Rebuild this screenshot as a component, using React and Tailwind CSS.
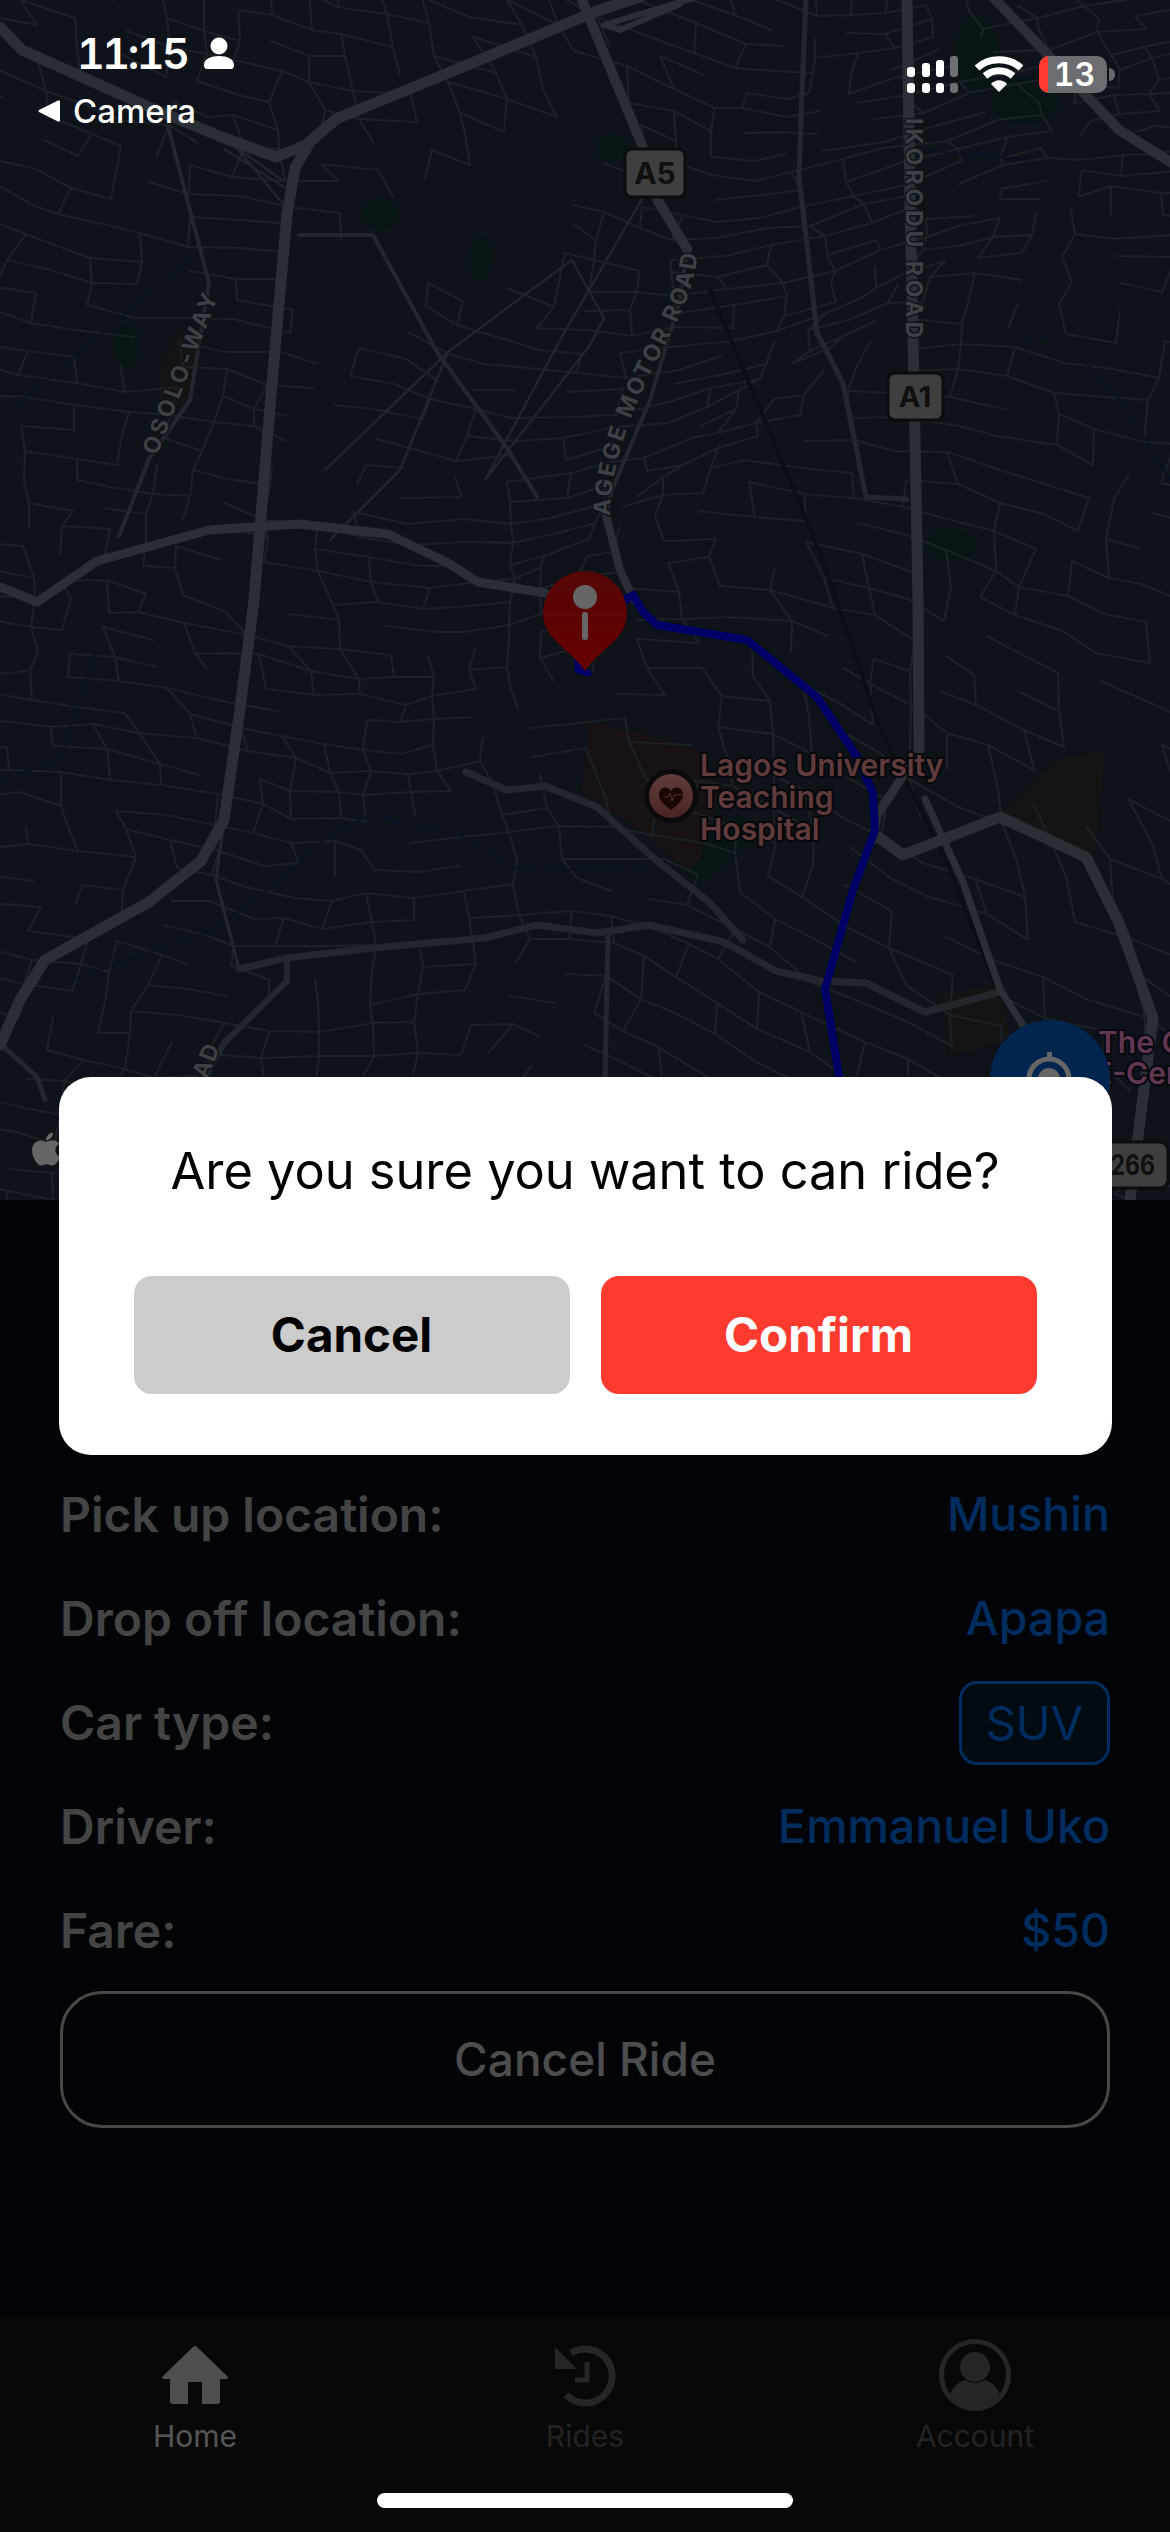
import React from "react";
import { FaApple } from "react-icons/fa";

function rng(seed) {
  let a = seed;
  return () => {
    a |= 0; a = (a + 0x6d2b79f5) | 0;
    let t = Math.imul(a ^ (a >>> 15), 1 | a);
    t = (t + Math.imul(t ^ (t >>> 7), 61 | t)) ^ t;
    return ((t ^ (t >>> 14)) >>> 0) / 4294967296;
  };
}

function buildStreets() {
  const r = rng(77);
  const SX = 44, SY = 27, W = 36, H = 66;
  const nodes = [];
  for (let i = 0; i < W; i++) {
    nodes[i] = [];
    for (let j = 0; j < H; j++) {
      const bx = (i - 4) * SX;
      const by = (j - 14) * SY;
      const x = bx + 30 * Math.sin(by / 120 + 0.7) + 14 * Math.sin((bx + by) / 70) + (r() - 0.5) * 15;
      const y = by + bx * (0.17 + 0.12 * Math.sin(bx / 300 + by / 260)) + 16 * Math.sin(bx / 90 + by / 200) + (r() - 0.5) * 11;
      nodes[i][j] = [Math.round(x), Math.round(y)];
    }
  }
  const isEmpty = (x, y) =>
    (y > 85 && y < 345 && x > 300 && x < 620 && y > 250 - (x - 300) * 0.55 && x < 640 - (y - 85) * 0.45 && !(x > 420 && y > 290)) ||
    (x > 300 && x < 350 && y > 230 && y < 500);
  const out = [];
  const edge = (a, b) => {
    const mx = (a[0] + b[0]) / 2, my = (a[1] + b[1]) / 2;
    if (isEmpty(mx, my)) return;
    out.push(`M${a[0]} ${a[1]}L${b[0]} ${b[1]}`);
  };
  for (let i = 0; i < W; i++) {
    for (let j = 0; j < H; j++) {
      const n = nodes[i][j];
      const zone = Math.sin(i * 0.55 + j * 0.2) + Math.cos(j * 0.33 - i * 0.15);
      if (i + 1 < W && r() < (zone > 0 ? 0.82 : 0.55)) edge(n, nodes[i + 1][j]);
      if (j + 1 < H && r() < (zone > 0 ? 0.38 : 0.62)) edge(n, nodes[i][j + 1]);
    }
  }
  return out.join("");
}

const STREETS = buildStreets();

const MAJOR = [
  ["M0 27L22 50L149 107L224 138L276 157L306 145L336 119L448 73L597 11L642 -4", 11],
  ["M336 119L310 142L295 168L287 214L272 383L254 600L239 716L224 820L201 861L149 902L45 960L20 1000L0 1045", 11],
  ["M582 0L642 145L657 199L687 249", 10],
  ["M634 600L620 570L606 515", 8],
  ["M907 0L910 200L914 383L918 600L919 749", 11],
  ["M992 -4L1119 130L1172 163", 10],
  ["M919 752L877 815L873 840", 9],
  ["M877 836L903 855L1000 817L1086 857L1119 923L1153 1018L1130 1200", 11],
  ["M0 587L37 602L97 561L209 530L299 524L388 534L448 563L478 582L545 593", 9],
  ["M925 799L963 882L1000 989L1026 1030", 7],
  ["M700 -4L604 25L620 30L680 4", 6],
];
const MEDIUM = [
  ["M687 249L680 300L650 400L612 490L606 515", 4],
  ["M466 772L507 790L545 786L597 807L657 861L709 902L743 940", 7],
  ["M239 969L287 958L373 948L485 938L537 925L597 933L649 925L724 942L776 971L821 981L866 983L925 1012L1000 992", 7],
  ["M287 960L287 981L224 1043L201 1085", 6],
  ["M0 1043L37 1077L45 1100", 5],
  ["M806 0L802 92L799 176L817 333L843 383L866 497L907 499", 5],
  ["M168 126L209 283L190 400L149 459L119 536", 4],
  ["M299 235L373 235L437 352L507 448L537 497", 4],
  ["M608 933L605 1080", 5],
  ["M239 969L216 880L224 820", 3],
];
const MINOR_HAND = "M572 260L515 302L448 352L325 470M572 260L604 318L590 345L485 480M448 352L400 470L330 540M224 149L284 187M230 140L284 205M240 150L282 180M642 199L560 340L485 480";

export default function App() {
  return (
    <div className="relative w-[1170px] h-[2532px] overflow-hidden flex flex-col bg-[#050a16] [font-family:Inter,sans-serif]">
      <div className="h-[1200px] shrink-0 bg-[#233041] overflow-hidden">
        <svg width="1170" height="1200" viewBox="0 0 1170 1200">
          <defs>
            <linearGradient id="pinFill" x1="0" y1="0" x2="0" y2="1">
              <stop offset="0" stopColor="#d81212" />
              <stop offset="1" stopColor="#ff0000" />
            </linearGradient>
            <linearGradient id="hospFill" x1="0" y1="0" x2="0" y2="1">
              <stop offset="0" stopColor="#f09a98" />
              <stop offset="1" stopColor="#b85a58" />
            </linearGradient>
          </defs>
          <g fill="#143537">
            <ellipse cx="977" cy="55" rx="22" ry="40" />
            <ellipse cx="1025" cy="100" rx="34" ry="24" />
            <ellipse cx="612" cy="148" rx="16" ry="14" />
            <ellipse cx="380" cy="214" rx="18" ry="16" />
            <ellipse cx="481" cy="258" rx="12" ry="22" />
            <ellipse cx="127" cy="345" rx="13" ry="22" />
            <ellipse cx="951" cy="545" rx="26" ry="16" />
            <path d="M672 862L735 815L770 826L700 885Z" />
          </g>
          <path d="M590 722L653 737L697 750L720 790L700 860L687 870L640 830L582 790Z" fill="#3f2e36" />
          <path d="M1000 815L1060 760L1105 750L1095 850L1086 857Z" fill="#363232" />
          <path d="M940 995L1000 985L1010 1040L950 1055Z" fill="#363232" />
          <path d="M160 370L180 330L200 345L190 400L160 410Z" fill="#363232" />
          <path d={STREETS} fill="none" stroke="#465062" strokeWidth="2.2" strokeLinecap="round" strokeLinejoin="round" />
          <path d={MINOR_HAND} fill="none" stroke="#505b6e" strokeWidth="2.5" strokeLinecap="round" strokeLinejoin="round" />
          <path d="M709 287L821 555L880 728L948 865L1000 998" fill="none" stroke="#1b2330" strokeWidth="4" />
          <g fill="none" stroke="#1b2c55" strokeWidth="2">
            <path d="M328 836L370 815L460 835L520 870L649 869" />
            <path d="M0 780L60 760L100 640" />
            <path d="M70 980L215 930L280 880L328 836" />
            <path d="M925 150L1030 160M1015 345L1060 335L1120 400L1170 480" />
            <path d="M0 420L200 250" />
            <path d="M770 1080L810 1095L840 1075" />
          </g>
          {MEDIUM.map(([d, w], i) => (
            <path key={i} d={d} fill="none" stroke="#586270" strokeWidth={w} strokeLinecap="round" strokeLinejoin="round" />
          ))}
          {MAJOR.map(([d, w], i) => (
            <path key={i} d={d} fill="none" stroke="#697586" strokeWidth={w} strokeLinecap="round" strokeLinejoin="round" />
          ))}
          <path d="M625 600L633 595L643 612L657 625L747 640L817 697L857 757L873 793L875 830L853 890L825 989L843 1100" fill="none" stroke="#0000ff" strokeWidth="8" strokeLinejoin="round" strokeLinecap="round" />
          <path d="M578 660L578 670L588 673" fill="none" stroke="#0000ff" strokeWidth="7" strokeLinejoin="round" strokeLinecap="round" />

          <g fontWeight="700" fontSize="23" fill="#9aa0aa" stroke="#233041" strokeWidth="3" style={{ paintOrder: "stroke" }}>
            <text transform="translate(157,456) rotate(-69)" letterSpacing="1.5" textLength="172">OSOLO-WAY</text>
            <text transform="translate(906,118) rotate(90)" letterSpacing="2" textLength="222">IKORODU ROAD</text>
            <path id="agege" d="M610 516C612 440 650 375 668 340C685 305 695 285 698 248" fill="none" stroke="none" />
            <text letterSpacing="1.5"><textPath href="#agege" textLength="280">AGEGE MOTOR ROAD</textPath></text>
            <text transform="translate(207,1080) rotate(-68)" letterSpacing="1">AD</text>
          </g>

          <g>
            <rect x="625" y="149" width="60" height="48" rx="7" fill="#9e9e9e" stroke="#1a1f27" strokeWidth="3" />
            <text x="655" y="184" textAnchor="middle" fontSize="30" fontWeight="700" fill="#2a2a2a">A5</text>
            <rect x="888" y="373" width="55" height="47" rx="7" fill="#9e9e9e" stroke="#1a1f27" strokeWidth="3" />
            <text x="915" y="407" textAnchor="middle" fontSize="29" fontWeight="700" fill="#2a2a2a">A1</text>
            <rect x="1080" y="1142" width="88" height="46" rx="8" fill="#9e9e9e" stroke="#1a1f27" strokeWidth="3" />
            <text x="1097" y="1175" fontSize="28" fontWeight="700" fill="#2a2a2a" textLength="58" lengthAdjust="spacingAndGlyphs">F266</text>
          </g>

          <FaApple x="27" y="1130" size={38} color="#ffffff" />

          <g>
            <circle cx="671" cy="796" r="27" fill="#1a1a22" />
            <circle cx="671" cy="796" r="22" fill="url(#hospFill)" />
            <path d="M671 810C660 802 659 798 659 794C659 787 668 785 671 791C674 785 683 787 683 794C683 798 682 802 671 810Z" fill="#400f0f" />
            <path d="M664 797H668L670 793L672 801L674 795H684" fill="none" stroke="#d07a78" strokeWidth="1" />
          </g>
          <g fontWeight="600" fontSize="30" fill="#f09393" stroke="#10151d" strokeWidth="4" style={{ paintOrder: "stroke" }}>
            <text x="700" y="776">Lagos University</text>
            <text x="700" y="808">Teaching</text>
            <text x="700" y="840">Hospital</text>
            <text x="1098" y="1053" fill="#f088d0">The C</text>
            <text x="1094" y="1084" fill="#f088d0">E-Centre</text>
          </g>

          <circle cx="1050" cy="1080" r="60" fill="#055cc6" />
          <circle cx="1049" cy="1079" r="20" fill="none" stroke="#ffffff" strokeWidth="5" />
          <circle cx="1049" cy="1079" r="11" fill="#ffffff" />
          <rect x="1047" y="1052" width="5" height="8" fill="#ffffff" />

          <path d="M543 613A42 42 0 1 1 627 613C627 640 600 648 585 671C570 648 543 640 543 613Z" fill="url(#pinFill)" />
          <circle cx="585" cy="597" r="12" fill="#ffffff" />
          <rect x="582" y="612" width="6" height="28" rx="2.5" fill="#ffffff" />
        </svg>
      </div>

      <div className="flex-1 flex flex-col px-[60px] pt-[273px]">
        <div className="flex flex-col gap-[20px]">
          <Row label="Pick up location:" value="Mushin" />
          <Row label="Drop off location:" value="Apapa" />
          <div className="h-[84px] flex items-center justify-between">
            <span className="text-[48px] font-semibold text-[#ababab]">Car type:</span>
            <span className="h-[84px] w-[151px] flex items-center justify-center rounded-[18px] border-[3px] border-[#0070ec] bg-[#06192e] text-[47px] text-[#0070ec]">SUV</span>
          </div>
          <Row label="Driver:" value="Emmanuel Uko" />
          <Row label="Fare:" value="$50" />
        </div>
        <button className="mt-[18px] h-[137px] rounded-[42px] border-[3px] border-[#b4b4b4] flex items-center justify-center text-[46px] font-medium text-[#c0c0c0]">
          Cancel Ride
        </button>
      </div>

      <div className="h-[215px] shrink-0 bg-[#141414] grid grid-cols-3">
        <div className="flex flex-col items-center pt-[29px]">
          <svg width="66" height="58" viewBox="0 0 66 58" className="block">
            <path d="M31 1Q33 -1 35 1L66 31Q66 33 64 33L58 33L58 55Q58 58 55 58L40 58L40 36L26 36L26 58L11 58Q8 58 8 55L8 33L2 33Q0 33 0 31Z" fill="#c6c6c6" />
          </svg>
          <span className="mt-[14px] text-[30px] leading-[36px] text-[#d4d4d4]">Home</span>
        </div>
        <div className="flex flex-col items-center pt-[26px]">
          <svg width="66" height="66" viewBox="0 0 66 66" className="block">
            <path d="M19 10A27 27 0 1 1 14 52" fill="none" stroke="#5f5f5f" strokeWidth="7" />
            <path d="M3 4L3 26L25 26Z" fill="#5f5f5f" />
            <path d="M35 19V37H23" fill="none" stroke="#5f5f5f" strokeWidth="5" />
          </svg>
          <span className="mt-[9px] text-[30px] leading-[36px] text-[#585858]">Rides</span>
        </div>
        <div className="flex flex-col items-center pt-[22px]">
          <svg width="72" height="72" viewBox="0 0 72 72" className="block">
            <circle cx="36" cy="36" r="33.5" fill="none" stroke="#5f5f5f" strokeWidth="5" />
            <circle cx="36" cy="28" r="15" fill="#5f5f5f" />
            <path d="M11 56Q15 44 26 41Q36 47 46 41Q57 44 61 56A32 32 0 0 1 11 56Z" fill="#5f5f5f" />
          </svg>
          <span className="mt-[7px] text-[30px] leading-[36px] text-[#585858]">Account</span>
        </div>
      </div>

      <div className="absolute inset-0 bg-black/60 flex items-center justify-center">
        <div className="w-[1053px] h-[378px] rounded-[32px] bg-white px-[75px] pt-[60px]">
          <p className="h-[68px] text-center text-[50.5px] leading-[68px] text-black whitespace-nowrap">Are you sure you want to can ride?</p>
          <div className="mt-[71px] flex gap-[31px]">
            <button className="flex-1 h-[118px] rounded-[18px] bg-[#cccccc] text-[47.5px] font-bold text-black">Cancel</button>
            <button className="flex-1 h-[118px] rounded-[18px] bg-[#ff3b30] text-[47.5px] font-bold text-white">Confirm</button>
          </div>
        </div>
      </div>

      <div className="absolute left-0 top-0 w-full h-[130px] text-white">
        <div className="absolute left-[77px] top-[27px] flex items-center gap-[17px]">
          <span className="text-[43px] leading-[52px] font-semibold tabular-nums tracking-[-2.5px]">11:15</span>
          <svg width="30" height="32" viewBox="0 0 30 32" className="block">
            <circle cx="15" cy="9" r="8.5" fill="#fff" />
            <path d="M0 28C0 22 7 19 15 19C23 19 30 22 30 28Q30 32 27 32H3Q0 32 0 28Z" fill="#fff" />
          </svg>
        </div>
        <div className="absolute left-[38px] top-[91px] flex items-center gap-[13px]">
          <svg width="22" height="22" viewBox="0 0 22 22" className="block">
            <path d="M22 2Q22 -1 19 1L1 10Q0 11 1 12L19 21Q22 23 22 20Z" fill="#fff" />
          </svg>
          <span className="text-[33px] leading-[40px] font-medium">Camera</span>
        </div>
        <div className="absolute left-[907px] top-[55px] flex items-center gap-[15px]">
          <svg width="52" height="38" viewBox="0 0 52 38" className="block">
            <g fill="#fff">
              <rect x="0" y="12" width="8" height="10" rx="3" />
              <rect x="15" y="8" width="8" height="14" rx="3" />
              <rect x="29" y="5" width="8" height="17" rx="3" />
              <rect x="0" y="28" width="8" height="10" rx="3" />
              <rect x="15" y="28" width="8" height="10" rx="3" />
              <rect x="29" y="28" width="8" height="10" rx="3" />
            </g>
            <rect x="43" y="1" width="8" height="21" rx="3" fill="#6d6f73" />
            <rect x="43" y="28" width="8" height="10" rx="3" fill="#6d6f73" />
          </svg>
          <svg width="50" height="38" viewBox="0 0 50 38" className="block">
            <path d="M3 13C15 2 35 2 47 13" fill="none" stroke="#fff" strokeWidth="7" />
            <path d="M11 21C19 14 31 14 39 21" fill="none" stroke="#fff" strokeWidth="7" />
            <path d="M17 29C22 24 28 24 33 29L25 37Z" fill="#fff" />
          </svg>
          <div className="flex items-center gap-[2px]">
            <div className="relative w-[68px] h-[37px] rounded-[10px] overflow-hidden bg-[#6b6d72] flex items-center justify-center">
              <div className="absolute left-0 top-0 bottom-0 w-[9px] bg-[#ff3b30]" />
              <span className="relative ml-[3px] text-[32px] leading-[37px] font-semibold tabular-nums">13</span>
            </div>
            <div className="w-[6px] h-[13px] rounded-r-full bg-[#66686c]" />
          </div>
        </div>
      </div>

      <div className="absolute left-[377px] top-[2493px] w-[416px] h-[15px] rounded-full bg-white" />
    </div>
  );
}

function Row({ label, value }) {
  return (
    <div className="h-[84px] flex items-center justify-between">
      <span className="text-[48px] font-semibold text-[#ababab]">{label}</span>
      <span className="text-[46.5px] font-medium text-[#0070ec]">{value}</span>
    </div>
  );
}
